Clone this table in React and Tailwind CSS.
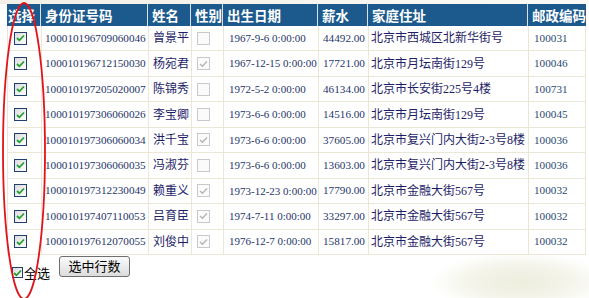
import React from "react";

const rows = [
  { id: "100010196709060046", name: "曾景平", sex: false, birth: "1967-9-6 0:00:00", pay: "44492.00", addr: "北京市西城区北新华街号", zip: "100031" },
  { id: "100010196712150030", name: "杨宛君", sex: true, birth: "1967-12-15 0:00:00", pay: "17721.00", addr: "北京市月坛南街129号", zip: "100046" },
  { id: "100010197205020007", name: "陈锦秀", sex: false, birth: "1972-5-2 0:00:00", pay: "46134.00", addr: "北京市长安街225号4楼", zip: "100731" },
  { id: "100010197306060026", name: "李宝卿", sex: false, birth: "1973-6-6 0:00:00", pay: "14516.00", addr: "北京市月坛南街129号", zip: "100045" },
  { id: "100010197306060034", name: "洪千宝", sex: true, birth: "1973-6-6 0:00:00", pay: "37605.00", addr: "北京市复兴门内大街2-3号8楼", zip: "100036" },
  { id: "100010197306060035", name: "冯淑芬", sex: false, birth: "1973-6-6 0:00:00", pay: "13603.00", addr: "北京市复兴门内大街2-3号8楼", zip: "100036" },
  { id: "100010197312230049", name: "赖重义", sex: true, birth: "1973-12-23 0:00:00", pay: "17790.00", addr: "北京市金融大街567号", zip: "100032" },
  { id: "100010197407110053", name: "吕育臣", sex: true, birth: "1974-7-11 0:00:00", pay: "33297.00", addr: "北京市金融大街567号", zip: "100032" },
  { id: "100010197612070055", name: "刘俊中", sex: true, birth: "1976-12-7 0:00:00", pay: "15817.00", addr: "北京市金融大街567号", zip: "100032" },
];

const cols = "grid grid-cols-[34px_107px_43px_32px_95px_50px_160px_58px]";

function GreenBox({ size = "w-[13px] h-[13px]" }) {
  return (
    <div className={`${size} border border-[#1f3f6c] bg-gradient-to-br from-[#dcdcdc] to-[#ffffff] flex items-center justify-center`}>
      <svg width="9" height="8" viewBox="0 0 9 8">
        <path d="M1 4 L3.4 6.3 L8 1.5" fill="none" stroke="#21a030" strokeWidth="1.8" />
      </svg>
    </div>
  );
}

function GrayBox({ checked }) {
  return (
    <div className="w-[13px] h-[13px] border border-[#c9c9c9] bg-[#fbfbfb] flex items-center justify-center">
      {checked && (
        <svg width="9" height="8" viewBox="0 0 9 8">
          <path d="M1 4 L3.4 6.3 L8 1.5" fill="none" stroke="#b4b4b4" strokeWidth="1.3" />
        </svg>
      )}
    </div>
  );
}

export default function App() {
  const head = ["选择", "身份证号码", "姓名", "性别", "出生日期", "薪水", "家庭住址", "邮政编码"];
  return (
    <div
      className="relative w-[589px] h-[298px] overflow-hidden bg-white bg-[radial-gradient(ellipse_90px_30px_at_520px_282px,#eceedd_0%,#f4f4ea_55%,rgba(255,255,255,0)_100%)] font-['Liberation_Serif','Noto_Sans_CJK_SC',serif]"
    >
      <div className="h-[4px] bg-gradient-to-r from-[#f1efe6] to-[#fbfaf6]" />
      <div className="pl-[7px]">
        <div className={`${cols} w-[579px] h-[22px] bg-[#1c5a8e] text-white font-bold text-[13.5px] leading-[22px] font-['Noto_Sans_CJK_SC',sans-serif]`}>
          {head.map((h, i) => (
            <div key={h} className={`${i === 0 ? "pl-[1px]" : "pl-[4px]"} ${i < 7 ? "border-r border-[#d8e2ec]" : ""} whitespace-nowrap overflow-hidden`}>
              {h}
            </div>
          ))}
        </div>
        <div className="w-[579px] border-l border-r border-[#ebe6d5]">
          {rows.map((r) => (
            <div key={r.id} className={`${cols} h-[25.44px] border-b border-[#ebe6d5] items-center text-[#26356a]`}>
              <div className="h-full pl-[6px] flex items-center border-r border-[#ebe6d5]">
                <GreenBox />
              </div>
              <div className="h-full flex items-center pl-[3px] text-[11.2px] border-r border-[#ebe6d5] whitespace-nowrap">{r.id}</div>
              <div className="h-full flex items-center pl-[4px] text-[12px] text-[#1d1d68] border-r border-[#ebe6d5] whitespace-nowrap">{r.name}</div>
              <div className="h-full flex items-center pl-[5px] border-r border-[#ebe6d5]">
                <GrayBox checked={r.sex} />
              </div>
              <div className="h-full flex items-center pl-[5px] text-[11px] border-r border-[#ebe6d5] whitespace-nowrap">{r.birth}</div>
              <div className="h-full flex items-center pl-[4px] text-[11.2px] border-r border-[#ebe6d5] whitespace-nowrap">{r.pay}</div>
              <div className="h-full flex items-center pl-[2px] text-[12px] text-[#1d1d68] border-r border-[#ebe6d5] whitespace-nowrap overflow-hidden">{r.addr}</div>
              <div className="h-full flex items-center pl-[5px] text-[11.2px] text-[#2a4a70] whitespace-nowrap">{r.zip}</div>
            </div>
          ))}
        </div>
        <div className="flex items-start mt-[1px]">
          <div className="flex items-center mt-[10px] ml-[5px]">
            <GreenBox size="w-[11px] h-[11px]" />
            <span className="ml-[1px] text-[13px] leading-[14px] text-black font-['Noto_Sans_CJK_SC',sans-serif]">全选</span>
          </div>
          <button className="ml-[9px] w-[71px] h-[21px] border border-[#6f6f6f] rounded-[3px] bg-gradient-to-b from-[#fbfbfb] to-[#dcdcdc] text-[13px] leading-[15px] text-black font-['Noto_Sans_CJK_SC',sans-serif] flex justify-center pt-[1px]">
            选中行数
          </button>
        </div>
      </div>
      <svg className="absolute inset-0 pointer-events-none" width="589" height="298" viewBox="0 0 589 298">
        <ellipse cx="24" cy="151" rx="21" ry="148" fill="none" stroke="#e0141c" strokeWidth="1.8" />
      </svg>
    </div>
  );
}
